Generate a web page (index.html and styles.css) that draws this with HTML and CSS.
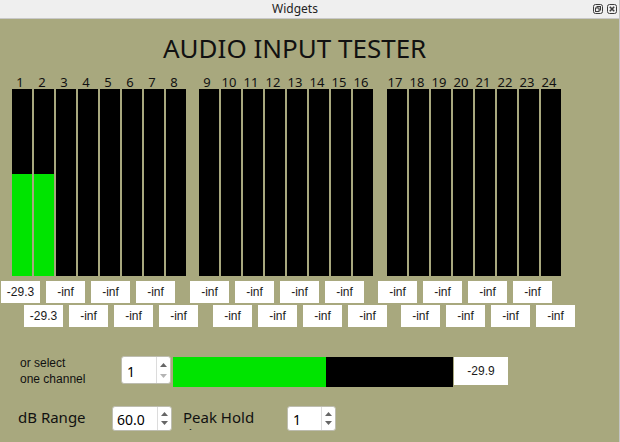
FILE: index.html
```html
<!DOCTYPE html>
<html>
<head>
<meta charset="utf-8">
<link rel="stylesheet" href="styles.css">
</head>
<body>
<div class="window">
  <div class="titlebar">
    <span class="title">Widgets</span>
    <div class="tb-buttons">
      <svg class="tb-btn" width="10" height="10" viewBox="0 0 10 10"><rect x="0.5" y="0.5" width="9" height="9" rx="2" fill="none" stroke="#3c3c3c"/><rect x="4" y="2.5" width="3.5" height="3.5" fill="none" stroke="#3c3c3c"/><rect x="2.5" y="4" width="3.5" height="3.5" fill="#efefef" stroke="#3c3c3c"/></svg>
      <svg class="tb-btn" width="10" height="10" viewBox="0 0 10 10"><rect x="0.5" y="0.5" width="9" height="9" rx="2" fill="none" stroke="#3c3c3c"/><path d="M2.8 2.8 L7.2 7.2 M7.2 2.8 L2.8 7.2" stroke="#3c3c3c" stroke-width="1.6"/></svg>
    </div>
  </div>
  <div class="content">
    <h1 class="heading">AUDIO INPUT TESTER</h1>

    <div class="meters">
      <div class="group">
        <div class="ch"><span class="num">1</span><div class="bar"><div class="fill" style="height:102px"></div></div></div>
        <div class="ch"><span class="num">2</span><div class="bar"><div class="fill" style="height:102px"></div></div></div>
        <div class="ch"><span class="num">3</span><div class="bar"></div></div>
        <div class="ch"><span class="num">4</span><div class="bar"></div></div>
        <div class="ch"><span class="num">5</span><div class="bar"></div></div>
        <div class="ch"><span class="num">6</span><div class="bar"></div></div>
        <div class="ch"><span class="num">7</span><div class="bar"></div></div>
        <div class="ch"><span class="num">8</span><div class="bar"></div></div>
      </div>
      <div class="group g2">
        <div class="ch"><span class="num">9</span><div class="bar"></div></div>
        <div class="ch"><span class="num">10</span><div class="bar"></div></div>
        <div class="ch"><span class="num">11</span><div class="bar"></div></div>
        <div class="ch"><span class="num">12</span><div class="bar"></div></div>
        <div class="ch"><span class="num">13</span><div class="bar"></div></div>
        <div class="ch"><span class="num">14</span><div class="bar"></div></div>
        <div class="ch"><span class="num">15</span><div class="bar"></div></div>
        <div class="ch"><span class="num">16</span><div class="bar"></div></div>
      </div>
      <div class="group g3">
        <div class="ch"><span class="num">17</span><div class="bar"></div></div>
        <div class="ch"><span class="num">18</span><div class="bar"></div></div>
        <div class="ch"><span class="num">19</span><div class="bar"></div></div>
        <div class="ch"><span class="num">20</span><div class="bar"></div></div>
        <div class="ch"><span class="num">21</span><div class="bar"></div></div>
        <div class="ch"><span class="num">22</span><div class="bar"></div></div>
        <div class="ch"><span class="num">23</span><div class="bar"></div></div>
        <div class="ch"><span class="num">24</span><div class="bar"></div></div>
      </div>
    </div>

    <div class="vals row1">
      <div class="vgroup">
        <div class="val">-29.3</div><div class="val">-inf</div><div class="val">-inf</div><div class="val">-inf</div>
      </div>
      <div class="vgroup g2">
        <div class="val">-inf</div><div class="val">-inf</div><div class="val">-inf</div><div class="val">-inf</div>
      </div>
      <div class="vgroup g3">
        <div class="val">-inf</div><div class="val">-inf</div><div class="val">-inf</div><div class="val">-inf</div>
      </div>
    </div>
    <div class="vals row2">
      <div class="vgroup">
        <div class="val">-29.3</div><div class="val">-inf</div><div class="val">-inf</div><div class="val">-inf</div>
      </div>
      <div class="vgroup g2">
        <div class="val">-inf</div><div class="val">-inf</div><div class="val">-inf</div><div class="val">-inf</div>
      </div>
      <div class="vgroup g3">
        <div class="val">-inf</div><div class="val">-inf</div><div class="val">-inf</div><div class="val">-inf</div>
      </div>
    </div>

    <div class="single">
      <div class="sel-label">or select<br>one channel</div>
      <div class="spin spin-ch">
        <div class="spin-text">1</div>
        <div class="spin-arrows">
          <svg width="13" height="26" viewBox="0 0 13 26"><path d="M3 10 L6.5 6 L10 10 Z" fill="#666"/><path d="M3 17 L6.5 21 L10 17 Z" fill="#b4b4b4"/></svg>
        </div>
      </div>
      <div class="level"><div class="level-fill" style="width:153px"></div></div>
      <div class="level-val">-29.9</div>
    </div>

    <div class="settings">
      <div class="set-label db-label">dB Range</div>
      <div class="spin spin-db">
        <div class="spin-text">60.0</div>
        <div class="spin-arrows">
          <svg width="13" height="23" viewBox="0 0 13 23"><path d="M3 9 L6.5 5 L10 9 Z" fill="#666"/><path d="M3 14 L6.5 18 L10 14 Z" fill="#666"/></svg>
        </div>
      </div>
      <div class="set-label peak-label">Peak Hold<br>time</div>
      <div class="spin spin-peak">
        <div class="spin-text">1</div>
        <div class="spin-arrows">
          <svg width="13" height="23" viewBox="0 0 13 23"><path d="M3 9 L6.5 5 L10 9 Z" fill="#666"/><path d="M3 14 L6.5 18 L10 14 Z" fill="#666"/></svg>
        </div>
      </div>
    </div>
  </div>
</div>
</body>
</html>
```

FILE: styles.css
```css
* { box-sizing: border-box; }
html, body { margin: 0; padding: 0; }
body {
  width: 620px;
  height: 442px;
  overflow: hidden;
  background: #a8a87e;
  font-family: "Noto Sans", sans-serif;
  color: #111;
}
.window {
  height: 442px;
  border-right: 1px solid #c4c4c4;
  display: flex;
  flex-direction: column;
}
.titlebar {
  height: 19px;
  flex: none;
  background: #efefef;
  border-bottom: 1px solid #c8c8c8;
  display: flex;
  align-items: center;
}
.title {
  flex: 1;
  text-align: center;
  font-size: 12px;
  line-height: 18px;
  color: #222;
}
.tb-buttons {
  width: 29px;
  display: flex;
  gap: 4px;
  padding-left: 3px;
  align-items: center;
}
.tb-btn { display: block; }

.content { padding-top: 14px; }
.heading {
  margin: 0 0 0 163px;
  font-size: 26px;
  font-weight: 400;
  line-height: 30px;
  color: #111;
}

.meters {
  margin-top: 12px;
  padding-left: 12px;
  display: flex;
}
.group { display: flex; gap: 2px; }
.group.g2 { margin-left: 13px; }
.group.g3 { margin-left: 14px; }
.ch { width: 20px; display: flex; flex-direction: column; }
.num {
  height: 14px;
  line-height: 14px;
  font-size: 13px;
  text-align: center;
  padding-right: 4px;
  white-space: nowrap;
  color: #111;
}
.bar {
  height: 187px;
  background: #000;
  display: flex;
  flex-direction: column;
  justify-content: flex-end;
}
.fill { background: #00e400; }

.vals { display: flex; }
.row1 { margin-top: 5px; padding-left: 1px; }
.row2 { margin-top: 2px; padding-left: 24px; }
.vgroup { display: flex; gap: 6px; }
.vgroup.g2 { margin-left: 15px; }
.vgroup.g3 { margin-left: 14px; }
.val {
  width: 39px;
  height: 22px;
  background: #fff;
  display: flex;
  align-items: center;
  justify-content: center;
  font-family: "Liberation Sans", Arial, sans-serif;
  font-size: 12px;
  color: #1a1a1a;
}

.single {
  margin-top: 29px;
  padding-left: 20px;
  display: flex;
  align-items: flex-start;
}
.sel-label {
  width: 101px;
  margin-top: -1px;
  font-family: "Liberation Sans", Arial, sans-serif;
  font-size: 12px;
  line-height: 16px;
  color: #111;
}
.spin {
  background: #fff;
  border: 1px solid #bdbdb0;
  border-radius: 3px;
  display: flex;
}
.spin-text {
  flex: 1;
  display: flex;
  align-items: center;
  font-size: 14px;
  color: #000;
  padding-left: 5px;
}
.spin-arrows {
  width: 14px;
  border-left: 1px solid #dcdcdc;
  display: flex;
  align-items: center;
}
.spin-arrows svg { display: block; }
.spin-ch { width: 50px; height: 28px; }
.spin-ch .spin-text { padding-top: 2px; }
.level {
  margin-left: 2px;
  margin-top: 1px;
  width: 280px;
  height: 30px;
  background: #000;
  display: flex;
}
.level-fill { height: 100%; background: #00e400; }
.level-val {
  margin-left: 1px;
  margin-top: 1px;
  width: 54px;
  height: 28px;
  background: #fff;
  display: flex;
  align-items: center;
  justify-content: center;
  font-family: "Liberation Sans", Arial, sans-serif;
  font-size: 12px;
  color: #1a1a1a;
}

.settings {
  margin-top: 19px;
  padding-left: 18px;
  display: flex;
  align-items: flex-start;
}
.set-label {
  font-size: 15px;
  color: #111;
}
.db-label {
  width: 94px;
  line-height: 22px;
}
.peak-label {
  width: 104px;
  margin-left: 11px;
  margin-top: 3px;
  line-height: 17px;
  height: 21px;
  overflow: hidden;
}
.spin-db { width: 60px; height: 25px; }
.spin-db .spin-text { padding-left: 4px; padding-top: 2px; }
.spin-peak { width: 49px; height: 25px; }
.spin-peak .spin-text { padding-top: 2px; }
```
